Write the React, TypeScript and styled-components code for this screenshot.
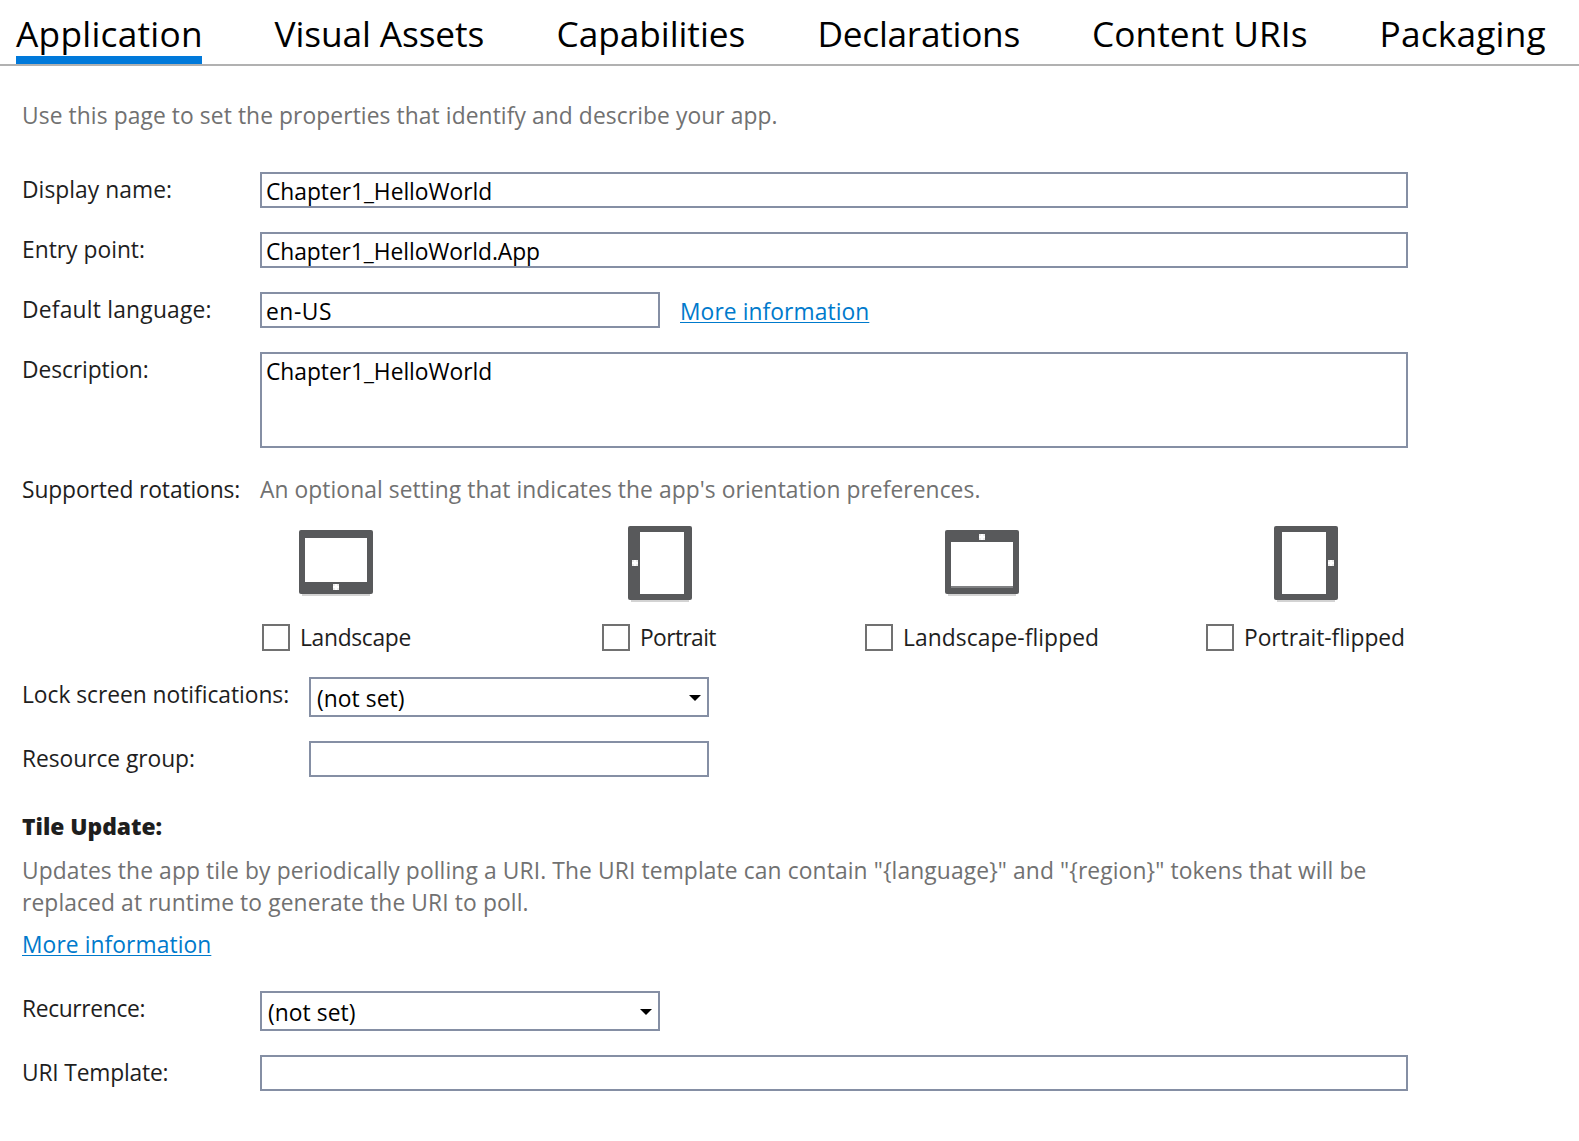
import React from 'react';
import styled, { createGlobalStyle } from 'styled-components';

const GlobalStyle = createGlobalStyle`
  * { box-sizing: border-box; }
  body {
    margin: 0;
    background: #fff;
    color: #1e1e1e;
    font-family: "Open Sans", "Noto Sans", sans-serif;
    font-size: 22.8px;
    line-height: 32px;
  }
`;

const Page = styled.div`
  width: 1579px;
  height: 1141px;
  overflow: hidden;
  background: #fff;
`;

const TabBar = styled.nav`
  display: flex;
  gap: 72.5px;
  height: 66px;
  padding-left: 16px;
  border-bottom: 2px solid #b1b1b1;
`;

const Tab = styled.div<{ $width: number; $spacing: number; $active?: boolean }>`
  flex: none;
  width: ${p => p.$width}px;
  height: 64px;
  padding-top: 9px;
  border-bottom: ${p => (p.$active ? '8px solid #0079da' : 'none')};
  color: #000;
  font-size: 35.28px;
  line-height: 48px;
  letter-spacing: ${p => p.$spacing}px;
  white-space: nowrap;
`;

const Form = styled.main`
  padding: 34px 0 0 22px;
`;

const Hint = styled.p<{ $spacing?: number; $top?: number }>`
  margin: 0;
  padding-top: ${p => p.$top ?? 0}px;
  color: #717171;
  letter-spacing: ${p => p.$spacing ?? 0}px;
  white-space: nowrap;
`;

const Rows = styled.div<{ $top: number; $gap: number }>`
  display: flex;
  flex-direction: column;
  gap: ${p => p.$gap}px;
  margin-top: ${p => p.$top}px;
`;

const Row = styled.div`
  display: flex;
  align-items: flex-start;
`;

const Label = styled.label<{ $width?: number; $spacing: number; $top?: number }>`
  flex: none;
  width: ${p => p.$width ?? 238}px;
  padding-top: ${p => p.$top ?? 2}px;
  letter-spacing: ${p => p.$spacing}px;
  white-space: nowrap;
`;

const Field = styled.div<{ $width?: number; $height?: number; $spacing?: number }>`
  flex: none;
  width: ${p => p.$width ?? 1148}px;
  height: ${p => p.$height ?? 36}px;
  padding-left: 4px;
  border: 2px solid #858fa4;
  color: #000;
  line-height: 36px;
  letter-spacing: ${p => p.$spacing ?? 0}px;
  white-space: nowrap;
`;

const Select = styled.div`
  display: flex;
  justify-content: space-between;
  flex: none;
  width: 400px;
  height: 40px;
  padding: 0 6px;
  border: 2px solid #858fa4;
  color: #000;
  line-height: 40px;
  letter-spacing: 0.05px;
`;

const Arrow = styled.svg`
  margin-top: 16px;
`;

const Link = styled.a<{ $left?: number; $top?: number }>`
  display: inline-block;
  margin-left: ${p => p.$left ?? 0}px;
  margin-top: ${p => p.$top ?? 0}px;
  color: #007acc;
  letter-spacing: 0.08px;
  text-decoration: underline;
  text-decoration-thickness: 1px;
  text-underline-offset: 2px;
  text-decoration-skip-ink: none;
`;

const Rotations = styled.div`
  display: flex;
  height: 146px;
  margin-top: 20px;
  padding-left: 240px;
`;

const Rotation = styled.div<{ $width: number; $after: number }>`
  display: flex;
  flex: none;
  flex-direction: column;
  width: ${p => p.$width}px;
  margin-right: ${p => p.$after}px;
`;

const DeviceSlot = styled.div`
  display: flex;
  align-items: center;
  justify-content: center;
  height: 76px;
`;

const CheckRow = styled.div`
  display: flex;
  align-items: center;
  height: 27px;
  margin-top: 22px;
`;

const Check = styled.span`
  flex: none;
  width: 28px;
  height: 27px;
  border: 2px solid #717171;
`;

const CheckText = styled.span<{ $spacing: number }>`
  margin: 1px 0 0 10px;
  letter-spacing: ${p => p.$spacing}px;
  white-space: nowrap;
`;

const Heading = styled.h2`
  margin: 34px 0 0;
  font-size: 22.8px;
  font-weight: 800;
  line-height: 32px;
  white-space: nowrap;
`;

type Orientation = 'landscape' | 'portrait' | 'landscape-flipped' | 'portrait-flipped';

const screens: Record<Orientation, { screen: number[]; button: number[] }> = {
  'landscape': { screen: [6, 8, 62, 44], button: [34, 54] },
  'portrait': { screen: [12, 6, 44, 62], button: [4, 34] },
  'landscape-flipped': { screen: [6, 12, 62, 46], button: [34, 4] },
  'portrait-flipped': { screen: [8, 6, 44, 62], button: [54, 34] },
};

function Device({ kind }: { kind: Orientation }) {
  const wide = kind.startsWith('landscape');
  const w = wide ? 74 : 64;
  const h = wide ? 64 : 74;
  const tail = wide ? 4 : 2;
  const { screen: [x, y, sw, sh], button: [bx, by] } = screens[kind];
  return (
    <svg width={w} height={h + tail} viewBox={`0 0 ${w} ${h + tail}`}>
      <rect x="3" y={h} width={w - 6} height="2" fill="#d3d3d3" />
      <rect width={w} height={h} rx="2" fill="#58595b" />
      <rect x={x} y={y} width={sw} height={sh} fill="#fff" />
      {kind === 'landscape-flipped' && <rect x="6" y="56" width="62" height="2" fill="#808183" />}
      <rect x={bx} y={by} width="6" height="6" fill="#ececec" />
      <path d={`M${bx + 2} ${by}h2v6h-2zM${bx} ${by + 2}h6v2h-6z`} fill="#fff" />
    </svg>
  );
}

function DropArrow() {
  return (
    <Arrow width="12" height="6" viewBox="0 0 12 6">
      <path d="M0 0h12L6 6z" fill="#000" />
    </Arrow>
  );
}

const tabs = [
  { text: 'Application', width: 186, spacing: 0.257 },
  { text: 'Visual Assets', width: 209.5, spacing: -0.109 },
  { text: 'Capabilities', width: 188.5, spacing: -0.05 },
  { text: 'Declarations', width: 202, spacing: -0.291 },
  { text: 'Content URIs', width: 215, spacing: 0.06 },
  { text: 'Packaging', width: 166, spacing: 0.187 },
];

const rotations: { kind: Orientation; text: string; width: number; after: number; spacing: number }[] = [
  { kind: 'landscape', text: 'Landscape', width: 148, after: 192, spacing: -0.3 },
  { kind: 'portrait', text: 'Portrait', width: 116, after: 147, spacing: -0.62 },
  { kind: 'landscape-flipped', text: 'Landscape-flipped', width: 234, after: 107, spacing: 0.07 },
  { kind: 'portrait-flipped', text: 'Portrait-flipped', width: 200, after: 0, spacing: -0.06 },
];

export default function App() {
  return (
    <Page>
      <GlobalStyle />
      <TabBar>
        {tabs.map((t, i) => (
          <Tab key={t.text} $width={t.width} $spacing={t.spacing} $active={i === 0}>{t.text}</Tab>
        ))}
      </TabBar>
      <Form>
        <Hint $spacing={0.088}>Use this page to set the properties that identify and describe your app.</Hint>
        <Rows $top={40} $gap={24}>
          <Row>
            <Label $spacing={0.048}>Display name:</Label>
            <Field $spacing={-0.04}>Chapter1_HelloWorld</Field>
          </Row>
          <Row>
            <Label $spacing={0.004}>Entry point:</Label>
            <Field $spacing={-0.05}>Chapter1_HelloWorld.App</Field>
          </Row>
          <Row>
            <Label $spacing={0.22}>Default language:</Label>
            <Field $width={400} $spacing={0.566}>en-US</Field>
            <Link $left={20} $top={4}>More information</Link>
          </Row>
          <Row>
            <Label $spacing={-0.093}>Description:</Label>
            <Field $height={96} $spacing={-0.04}>Chapter1_HelloWorld</Field>
          </Row>
        </Rows>
        <Rows $top={25} $gap={0}>
          <Row>
            <Label $top={1} $spacing={-0.114}>Supported rotations:</Label>
            <Hint $top={1} $spacing={0.07}>An optional setting that indicates the app's orientation preferences.</Hint>
          </Row>
        </Rows>
        <Rotations>
          {rotations.map(r => (
            <Rotation key={r.kind} $width={r.width} $after={r.after}>
              <DeviceSlot><Device kind={r.kind} /></DeviceSlot>
              <CheckRow>
                <Check />
                <CheckText $spacing={r.spacing}>{r.text}</CheckText>
              </CheckRow>
            </Rotation>
          ))}
        </Rotations>
        <Rows $top={5} $gap={24}>
          <Row>
            <Label $width={287} $spacing={-0.035}>Lock screen notifications:</Label>
            <Select>(not set)<DropArrow /></Select>
          </Row>
          <Row>
            <Label $width={287} $spacing={-0.052}>Resource group:</Label>
            <Field $width={400} />
          </Row>
        </Rows>
        <Heading>Tile Update:</Heading>
        <Rows $top={12} $gap={10}>
          <Hint $spacing={0.116}>
            Updates the app tile by periodically polling a URI. The URI template can contain "{'{language}'}" and "{'{region}'}" tokens that will be
            <br />
            replaced at runtime to generate the URI to poll.
          </Hint>
          <Row><Link>More information</Link></Row>
        </Rows>
        <Rows $top={30} $gap={24}>
          <Row>
            <Label $spacing={-0.35}>Recurrence:</Label>
            <Select>(not set)<DropArrow /></Select>
          </Row>
          <Row>
            <Label $spacing={-0.18}>URI Template:</Label>
            <Field />
          </Row>
        </Rows>
      </Form>
    </Page>
  );
}
